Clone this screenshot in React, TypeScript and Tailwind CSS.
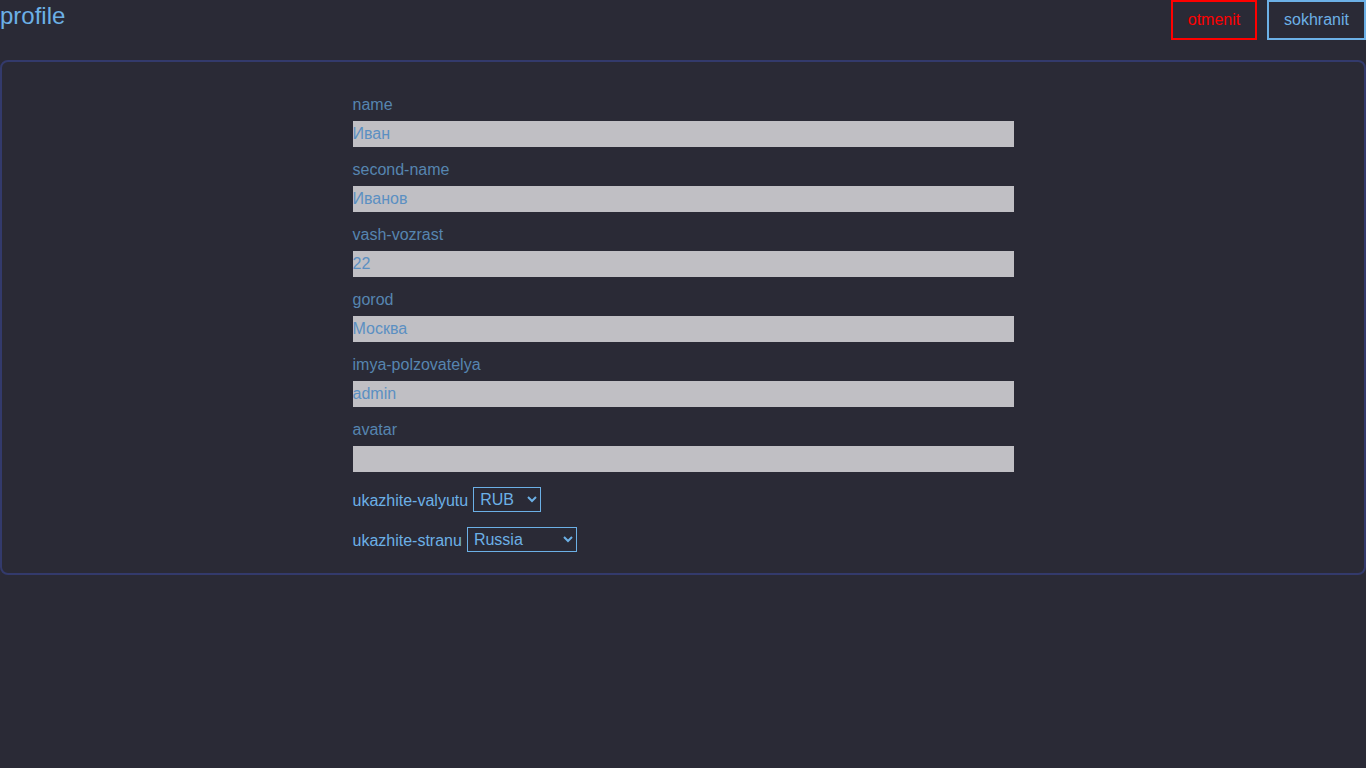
import { useState } from "react"

type Field = {
  key: string
  label: string
  value: string
}

const initialFields: Field[] = [
  { key: "name", label: "name", value: "Иван" },
  { key: "secondName", label: "second-name", value: "Иванов" },
  { key: "age", label: "vash-vozrast", value: "22" },
  { key: "city", label: "gorod", value: "Москва" },
  { key: "username", label: "imya-polzovatelya", value: "admin" },
  { key: "avatar", label: "avatar", value: "" },
]

export default function App() {
  const [fields, setFields] = useState<Field[]>(initialFields)
  const [currency, setCurrency] = useState("RUB")
  const [country, setCountry] = useState("Russia")

  const updateField = (key: string, value: string) => {
    setFields((prev) => prev.map((f) => (f.key === key ? { ...f, value } : f)))
  }

  return (
    <div
      className="min-h-screen bg-[#2a2a36] text-[16px]"
      style={{ fontFamily: '"Liberation Sans", Arial, sans-serif' }}
    >
      <div className="flex items-start justify-between h-[40px]">
        <h1 className="text-[24px] leading-[32px] text-[#6cb0e6] font-normal">profile</h1>
        <div className="flex gap-[10px]">
          <button className="w-[86px] h-[40px] border-2 border-[#ff0000] text-[#ff0000] bg-transparent">
            otmenit
          </button>
          <button className="w-[99px] h-[40px] border-2 border-[#6cb0e6] text-[#6cb0e6] bg-transparent">
            sokhranit
          </button>
        </div>
      </div>

      <div className="mt-[20px] border-2 border-[#333a6c] rounded-[8px] pt-[34px] pb-[21px]">
        <div className="w-[661px] mx-auto">
          {fields.map((f) => (
            <div key={f.key} className="mb-[13px]">
              <label className="block leading-[18px] mb-[7px] text-[#5685b0]">{f.label}</label>
              <input
                className="block w-full h-[26px] bg-[#c0bfc4] text-[#5b8fc2] outline-none border-0 p-0"
                value={f.value}
                onChange={(e) => updateField(f.key, e.target.value)}
              />
              <div className="h-[1px]" />
            </div>
          ))}

          <div className="flex items-center gap-[5px] mt-[14px] h-[25px]">
            <span className="text-[#6cb0e6] pt-[2px]">ukazhite-valyutu</span>
            <select
              className="w-[68px] h-[25px] border border-[#6cb0e6] bg-transparent text-[#6cb0e6] pl-[2px]"
              value={currency}
              onChange={(e) => setCurrency(e.target.value)}
            >
              <option value="RUB">RUB</option>
              <option value="USD">USD</option>
              <option value="EUR">EUR</option>
            </select>
          </div>

          <div className="flex items-center gap-[5px] mt-[15px] h-[25px]">
            <span className="text-[#6cb0e6] pt-[2px]">ukazhite-stranu</span>
            <select
              className="w-[110px] h-[25px] border border-[#6cb0e6] bg-transparent text-[#6cb0e6] pl-[2px]"
              value={country}
              onChange={(e) => setCountry(e.target.value)}
            >
              <option value="Russia">Russia</option>
              <option value="Belarus">Belarus</option>
              <option value="Kazakhstan">Kazakhstan</option>
            </select>
          </div>
        </div>
      </div>
    </div>
  )
}
